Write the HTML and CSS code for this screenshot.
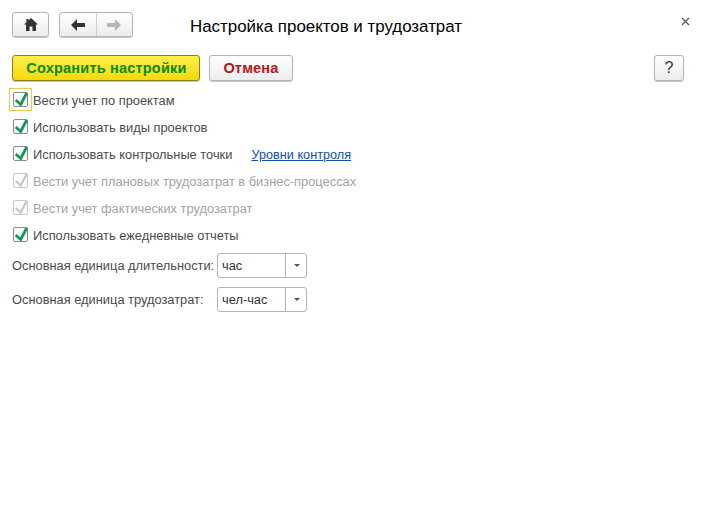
FILE: index.html
```html
<!DOCTYPE html>
<html lang="ru">
<head>
<meta charset="utf-8">
<title>Настройка проектов и трудозатрат</title>
<link rel="stylesheet" href="styles.css">
</head>
<body>
<div class="page">
  <header class="top">
    <button class="btn home" aria-label="Домой">
      <svg width="14" height="13" viewBox="0 0 14 13"><path d="M7 0 14 6.6H12V13H8.4V8.6H5.6V13H2V6.6H0L2.4 4.3V1H4.4V2.5Z" fill="#333"/></svg>
    </button>
    <div class="btn nav">
      <span class="nav-cell">
        <svg width="14" height="12" viewBox="0 0 14 12"><path d="M6 0 0 6l6 6V8H14V4H6Z" fill="#333"/></svg>
      </span>
      <span class="nav-cell">
        <svg width="14" height="12" viewBox="0 0 14 12"><path d="M8 0 14 6l-6 6V8H0V4H8Z" fill="#b5b5b5"/></svg>
      </span>
    </div>
    <h1 class="title">Настройка проектов и трудозатрат</h1>
    <span class="close">
      <svg width="9" height="9" viewBox="0 0 9 9"><path d="M1 1 8 8M8 1 1 8" stroke="#555" stroke-width="1.2" fill="none"/></svg>
    </span>
  </header>

  <div class="toolbar">
    <button class="btn save">Сохранить настройки</button>
    <button class="btn cancel">Отмена</button>
    <button class="btn help">?</button>
  </div>

  <div class="rows">
    <div class="row">
      <span class="focus"><span class="box"><svg class="tick" width="16" height="15" viewBox="0 0 16 15"><path d="M2.7 8 7.7 12.5 13.7 1" stroke="#0d9a57" stroke-width="2.8" fill="none"/></svg></span></span>
      <span class="label">Вести учет по проектам</span>
    </div>
    <div class="row">
      <span class="focus plain"><span class="box"><svg class="tick" width="16" height="15" viewBox="0 0 16 15"><path d="M2.7 8 7.7 12.5 13.7 1" stroke="#0d9a57" stroke-width="2.8" fill="none"/></svg></span></span>
      <span class="label">Использовать виды проектов</span>
    </div>
    <div class="row">
      <span class="focus plain"><span class="box"><svg class="tick" width="16" height="15" viewBox="0 0 16 15"><path d="M2.7 8 7.7 12.5 13.7 1" stroke="#0d9a57" stroke-width="2.8" fill="none"/></svg></span></span>
      <span class="label">Использовать контрольные точки</span>
      <a class="link" href="#">Уровни контроля</a>
    </div>
    <div class="row disabled">
      <span class="focus plain"><span class="box"><svg class="tick" width="16" height="15" viewBox="0 0 16 15"><path d="M2.7 8 7.7 12.5 13.7 1" stroke="#c6c6c6" stroke-width="2.2" fill="none"/></svg></span></span>
      <span class="label">Вести учет плановых трудозатрат в бизнес-процессах</span>
    </div>
    <div class="row disabled">
      <span class="focus plain"><span class="box"><svg class="tick" width="16" height="15" viewBox="0 0 16 15"><path d="M2.7 8 7.7 12.5 13.7 1" stroke="#c6c6c6" stroke-width="2.2" fill="none"/></svg></span></span>
      <span class="label">Вести учет фактических трудозатрат</span>
    </div>
    <div class="row">
      <span class="focus plain"><span class="box"><svg class="tick" width="16" height="15" viewBox="0 0 16 15"><path d="M2.7 8 7.7 12.5 13.7 1" stroke="#0d9a57" stroke-width="2.8" fill="none"/></svg></span></span>
      <span class="label">Использовать ежедневные отчеты</span>
    </div>
  </div>

  <div class="fields">
    <div class="field">
      <span class="field-label">Основная единица длительности:</span>
      <div class="select"><span class="value">час</span><span class="arrow"></span></div>
    </div>
    <div class="field">
      <span class="field-label">Основная единица трудозатрат:</span>
      <div class="select"><span class="value">чел-час</span><span class="arrow"></span></div>
    </div>
  </div>
</div>
</body>
</html>
```
FILE: styles.css
```css
* { box-sizing: border-box; }
html, body { margin: 0; padding: 0; background: #fff; }
body { font-family: "Liberation Sans", Arial, sans-serif; font-size: 12.85px; color: #4b4b4b; }
.page { width: 703px; height: 528px; padding: 12px 19px 0 12px; }

.top { display: flex; align-items: flex-start; height: 25px; }
.btn {
  border: 1px solid #b4b4b4;
  border-radius: 3px;
  background: linear-gradient(#ffffff, #ececec);
  box-shadow: 0 1px 0 #c8c8c8;
  font-family: inherit;
  padding: 0;
  display: flex;
  align-items: center;
  justify-content: center;
}
.home { width: 37px; height: 25px; }
.nav { width: 74px; height: 25px; margin-left: 10px; }
.nav-cell { flex: 1; height: 100%; display: flex; align-items: center; justify-content: center; }
.nav-cell + .nav-cell { border-left: 1px solid #cfcfcf; }
.title { margin: 0 0 0 57px; padding-top: 2px; font-size: 16.9px; font-weight: 400; color: #000; line-height: 25px; flex: 1; }
.close { display: flex; margin: 5px -6px 0 0; }

.toolbar { display: flex; margin-top: 18px; height: 26px; }
.save {
  width: 188px; height: 26px;
  border-color: #8f7d1c;
  background: linear-gradient(#fff04a, #f4d90c);
  color: #0a8a0a;
  font-size: 14.5px;
  font-weight: 700;
  letter-spacing: .2px;
  padding-left: 1px;
}
.cancel {
  width: 84px; height: 26px; margin-left: 9px;
  color: #b3171c;
  font-size: 14.5px;
  font-weight: 700;
  letter-spacing: .2px;
}
.help { width: 30px; height: 26px; margin-left: auto; font-size: 16px; color: #333; }

.rows { margin-top: 5px; }
.row { display: flex; align-items: center; height: 27px; }
.focus {
  width: 23px; height: 23px;
  margin-left: -3px; margin-right: 1px;
  border: 1px solid #f3c84a;
  display: flex; align-items: center; justify-content: center;
}
.focus.plain { border-color: transparent; }
.box {
  position: relative;
  display: block;
  width: 15px; height: 15px;
  border: 1px solid #8c8c8c;
  border-radius: 2px;
  background: #fff;
}
.tick { position: absolute; left: -1px; top: -1px; }
.label { padding-top: 2px; }
.disabled .box { border-color: #c9c9c9; }
.disabled .label { color: #a3a3a3; }
.link { margin-left: 19px; padding-top: 2px; color: #0f4fb0; text-decoration: underline; font-size: 12.7px; }

.fields { margin-top: 5px; display: flex; flex-direction: column; gap: 9px; }
.field { display: flex; align-items: center; height: 25px; }
.field-label { width: 205px; white-space: nowrap; }
.select {
  width: 90px; height: 25px;
  border: 1px solid #b4b4b4;
  border-radius: 3px;
  display: flex;
  align-items: center;
  background: #fff;
}
.value { flex: 1; padding-left: 4px; color: #333; }
.arrow {
  width: 21px; height: 100%;
  border-left: 1px solid #b4b4b4;
  position: relative;
}
.arrow::after {
  content: "";
  position: absolute;
  left: 8px; top: 10px;
  border: 3px solid transparent;
  border-top: 3px solid #555;
  border-bottom: 0;
}
```
